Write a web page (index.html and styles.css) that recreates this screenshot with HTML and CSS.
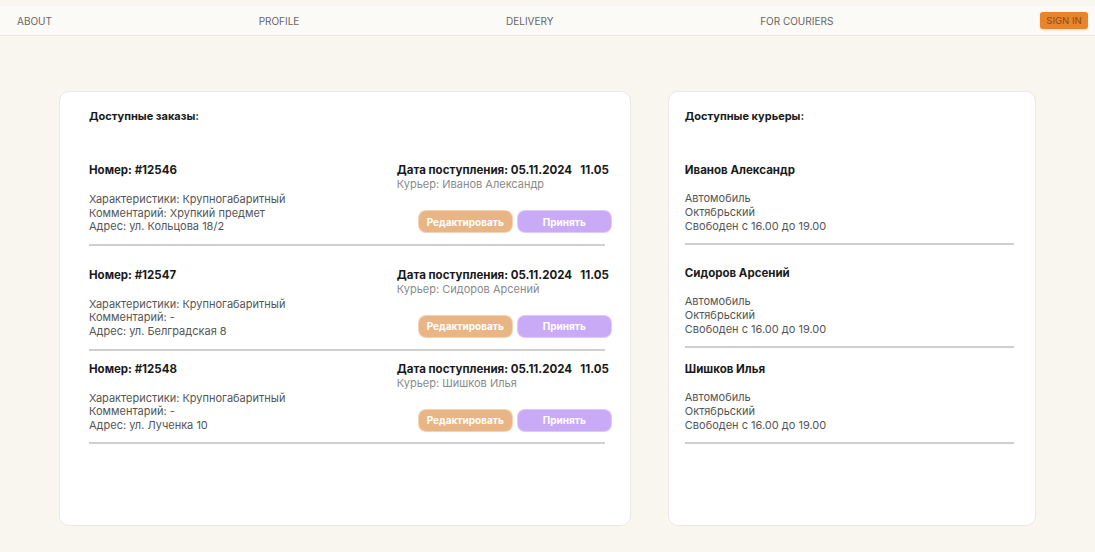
FILE: index.html
```html
<!DOCTYPE html>
<html lang="ru">
<head>
<meta charset="utf-8">
<title>Orders</title>
<link rel="stylesheet" href="styles.css">
</head>
<body>
<header class="nav">
  <a class="nav-link">ABOUT</a>
  <a class="nav-link">PROFILE</a>
  <a class="nav-link">DELIVERY</a>
  <a class="nav-link">FOR COURIERS</a>
  <button class="sign-in">SIGN IN</button>
</header>
<main class="page">
  <section class="card card-orders">
    <h2 class="card-title">Доступные заказы:</h2>
    <div class="list">
      <div class="order">
        <div class="order-left">
          <div class="order-num">Номер: #12546</div>
          <div class="info">
            <div>Характеристики: Крупногабаритный</div>
            <div>Комментарий: Хрупкий предмет</div>
            <div>Адрес: ул. Кольцова 18/2</div>
          </div>
        </div>
        <div class="order-right">
          <div class="order-date"><span>Дата поступления: 05.11.2024</span><span>11.05</span></div>
          <div class="order-courier">Курьер: Иванов Александр</div>
          <div class="actions">
            <button class="btn btn-edit">Редактировать</button>
            <button class="btn btn-accept">Принять</button>
          </div>
        </div>
      </div>
      <div class="order">
        <div class="order-left">
          <div class="order-num">Номер: #12547</div>
          <div class="info">
            <div>Характеристики: Крупногабаритный</div>
            <div>Комментарий: -</div>
            <div>Адрес: ул. Белградская 8</div>
          </div>
        </div>
        <div class="order-right">
          <div class="order-date"><span>Дата поступления: 05.11.2024</span><span>11.05</span></div>
          <div class="order-courier">Курьер: Сидоров Арсений</div>
          <div class="actions">
            <button class="btn btn-edit">Редактировать</button>
            <button class="btn btn-accept">Принять</button>
          </div>
        </div>
      </div>
      <div class="order">
        <div class="order-left">
          <div class="order-num">Номер: #12548</div>
          <div class="info">
            <div>Характеристики: Крупногабаритный</div>
            <div>Комментарий: -</div>
            <div>Адрес: ул. Лученка 10</div>
          </div>
        </div>
        <div class="order-right">
          <div class="order-date"><span>Дата поступления: 05.11.2024</span><span>11.05</span></div>
          <div class="order-courier">Курьер: Шишков Илья</div>
          <div class="actions">
            <button class="btn btn-edit">Редактировать</button>
            <button class="btn btn-accept">Принять</button>
          </div>
        </div>
      </div>
    </div>
  </section>
  <section class="card card-couriers">
    <h2 class="card-title">Доступные курьеры:</h2>
    <div class="list">
      <div class="courier">
        <div class="courier-name">Иванов Александр</div>
        <div class="info">
          <div>Автомобиль</div>
          <div>Октябрьский</div>
          <div>Свободен с 16.00 до 19.00</div>
        </div>
      </div>
      <div class="courier">
        <div class="courier-name">Сидоров Арсений</div>
        <div class="info">
          <div>Автомобиль</div>
          <div>Октябрьский</div>
          <div>Свободен с 16.00 до 19.00</div>
        </div>
      </div>
      <div class="courier">
        <div class="courier-name">Шишков Илья</div>
        <div class="info">
          <div>Автомобиль</div>
          <div>Октябрьский</div>
          <div>Свободен с 16.00 до 19.00</div>
        </div>
      </div>
    </div>
  </section>
</main>
</body>
</html>
```

FILE: styles.css
```css
* { box-sizing: border-box; }

html, body {
  margin: 0;
  padding: 0;
}

body {
  background: #f9f5ef;
  font-family: Inter, "Noto Sans", "DejaVu Sans", sans-serif;
  color: #1c1c1c;
  padding-top: 6px;
}

.nav {
  height: 30px;
  background: #fcfaf7;
  border-bottom: 1px solid #ece8e2;
  display: flex;
  align-items: center;
  justify-content: space-between;
  padding: 0 7px 0 17px;
}

.nav-link {
  font-size: 10px;
  color: #666;
}

.sign-in {
  width: 48px;
  height: 17px;
  border: none;
  border-radius: 3px;
  background: #e8842c;
  color: #8c4a14;
  font-family: inherit;
  font-size: 9.5px;
  padding: 0;
  box-shadow: 0 1px 2px rgba(0,0,0,0.12);
}

.page {
  display: flex;
  gap: 37px;
  padding: 55px 59px 0 59px;
}

.card {
  background: #fff;
  border: 1px solid #ece9e4;
  border-radius: 10px;
  height: 435px;
  padding-top: 17px;
}

.card-orders {
  width: 573px;
  padding-left: 29px;
  padding-right: 25px;
}

.card-couriers {
  width: 369px;
  padding-left: 16px;
  padding-right: 21px;
}

.card-title {
  margin: 0;
  font-size: 11px;
  line-height: 14px;
  font-weight: 700;
  color: #1a1a1a;
}

.list {
  margin-top: 40px;
}

.order {
  display: flex;
  justify-content: space-between;
  border-bottom: 2px solid #cfcfcf;
  padding-bottom: 10px;
}

.order:nth-child(2) { margin-top: 22px; }
.order:nth-child(3) { margin-top: 11px; }

.order-num,
.courier-name {
  font-size: 11.5px;
  line-height: 14px;
  font-weight: 700;
  color: #1a1a1a;
}

.info {
  margin-top: 16px;
  font-size: 11px;
  line-height: 13.6px;
  color: #555;
}

.order-right {
  display: flex;
  flex-direction: column;
  align-items: flex-start;
  margin-right: -6px;
  width: 214px;
}

.order-date {
  display: flex;
  justify-content: space-between;
  width: 212px;
  font-size: 11.5px;
  line-height: 14px;
  font-weight: 700;
  color: #1a1a1a;
}

.order-courier {
  font-size: 11px;
  line-height: 14px;
  color: #8a8a8a;
}

.actions {
  display: flex;
  gap: 6px;
  margin-top: 20px;
  align-self: flex-end;
}

.btn {
  width: 93px;
  height: 21px;
  border: none;
  border-radius: 7px;
  color: #fff;
  font-family: inherit;
  font-size: 10px;
  font-weight: 700;
  padding: 0;
}

.btn-edit {
  background: #e9b585;
  box-shadow: 0 0 0 1px #f1d3b5;
}

.btn-accept {
  background: #c8aaf6;
  box-shadow: 0 0 0 1px #ddcaf9;
}

.courier {
  border-bottom: 2px solid #cfcfcf;
  padding-bottom: 10px;
}

.courier .info {
  margin-top: 14px;
  line-height: 14px;
}

.courier:nth-child(2) { margin-top: 21px; }
.courier:nth-child(3) { margin-top: 14px; }
```
